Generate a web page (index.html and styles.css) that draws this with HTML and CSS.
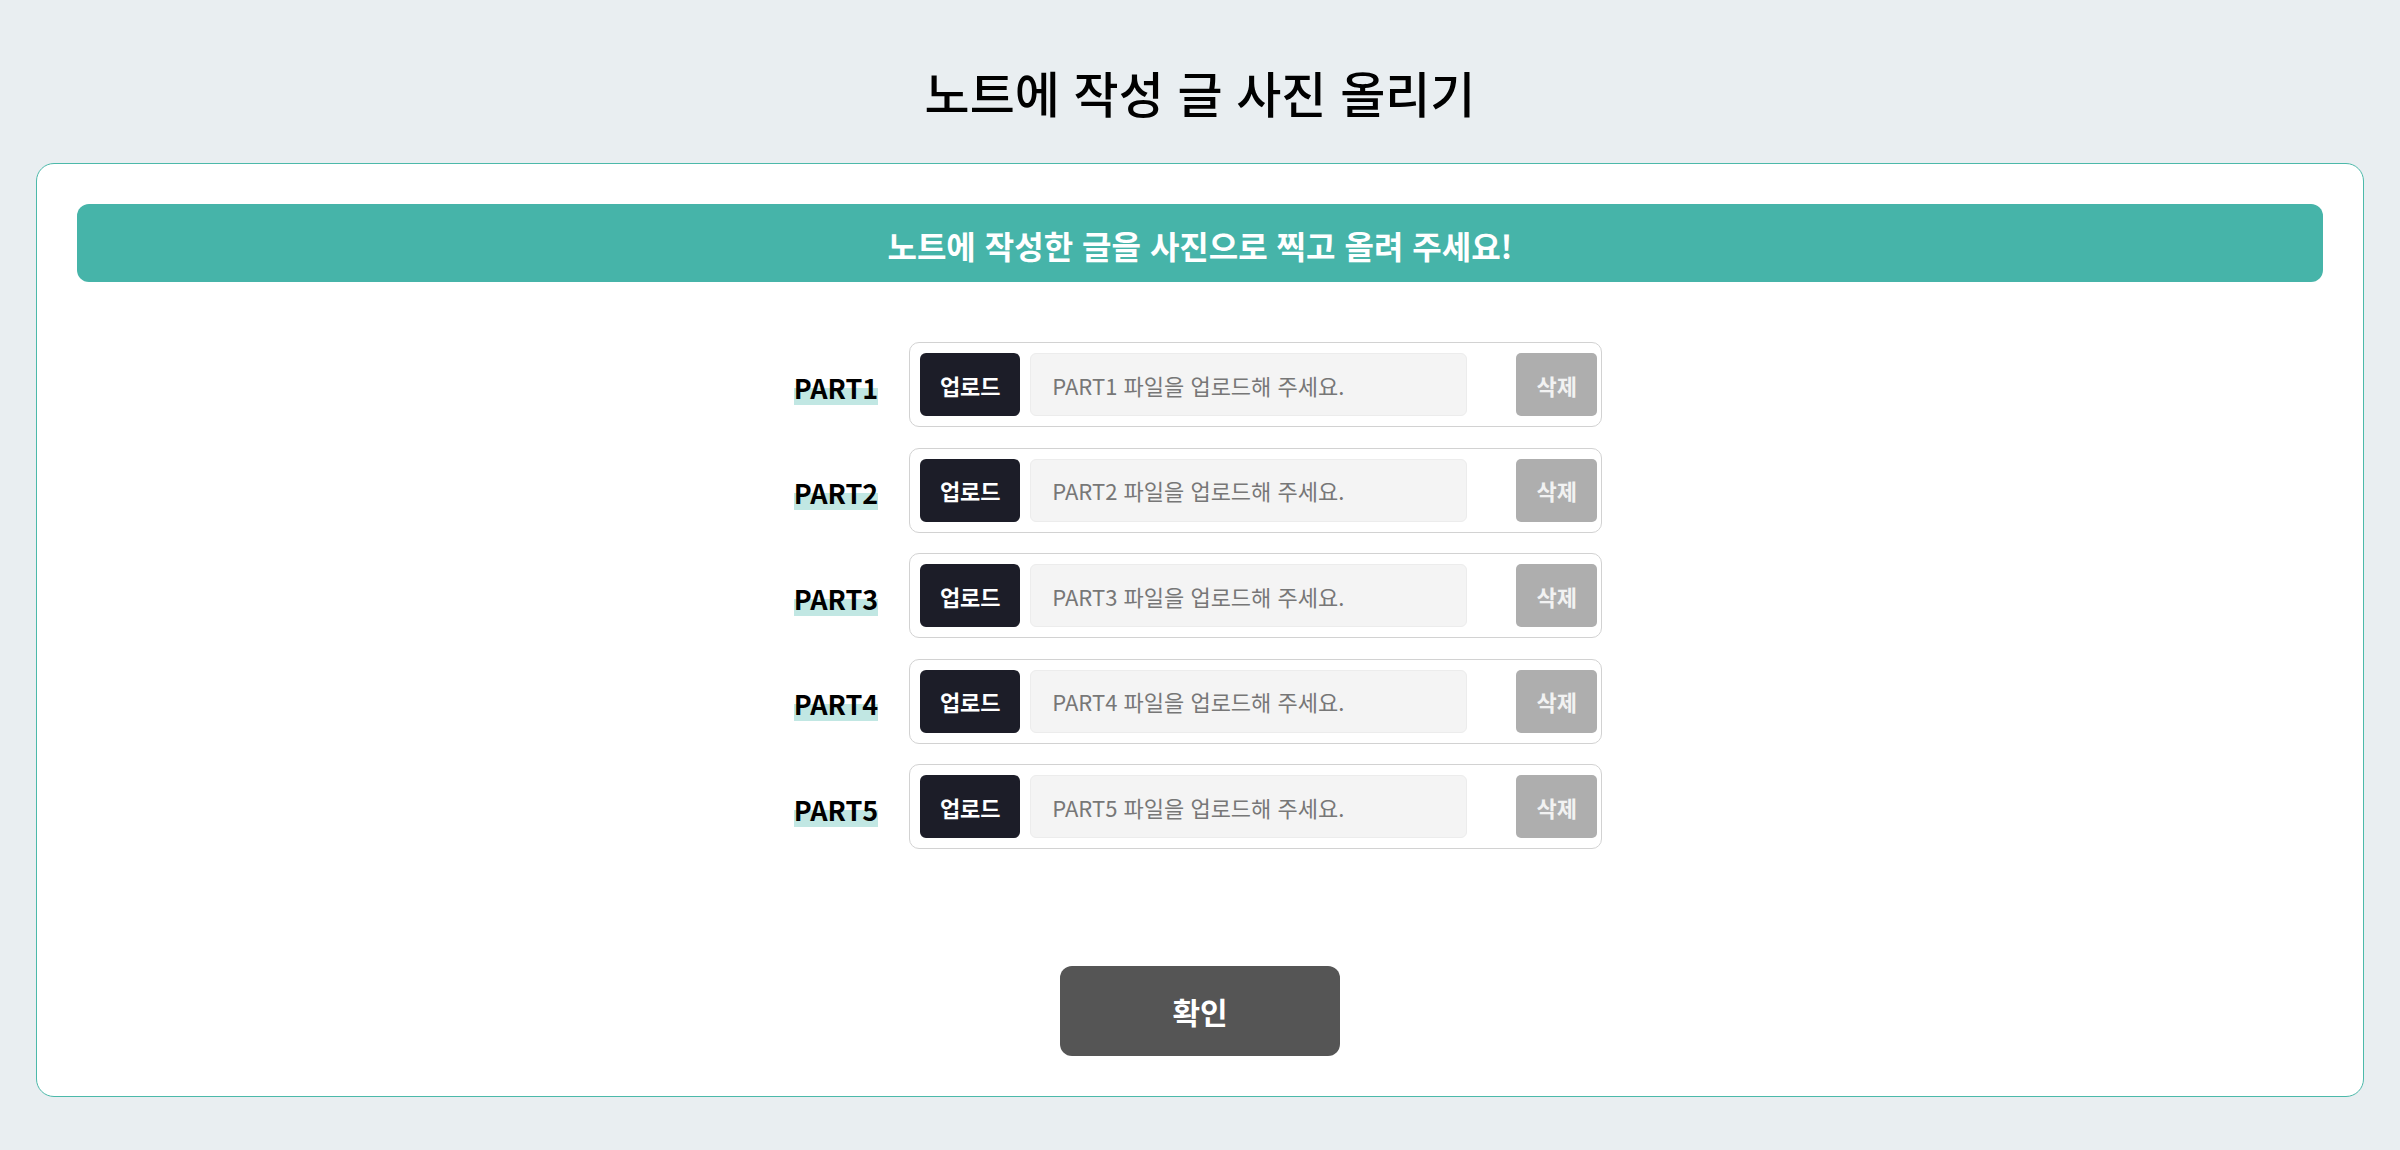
FILE: index.html
```html
<!DOCTYPE html>
<html lang="ko">
<head>
<meta charset="utf-8">
<title>노트에 작성 글 사진 올리기</title>
<link rel="stylesheet" href="styles.css">
</head>
<body>
<header class="page-header">
  <h1 class="page-title">노트에 작성 글 사진 올리기</h1>
</header>
<main class="card">
  <div class="banner">노트에 작성한 글을 사진으로 찍고 올려 주세요!</div>
  <div class="parts">
    <div class="part-row">
      <span class="part-label">PART1</span>
      <div class="upload-box">
        <button class="btn-upload" type="button">업로드</button>
        <div class="file-field">PART1 파일을 업로드해 주세요.</div>
        <button class="btn-delete" type="button">삭제</button>
      </div>
    </div>
    <div class="part-row">
      <span class="part-label">PART2</span>
      <div class="upload-box">
        <button class="btn-upload" type="button">업로드</button>
        <div class="file-field">PART2 파일을 업로드해 주세요.</div>
        <button class="btn-delete" type="button">삭제</button>
      </div>
    </div>
    <div class="part-row">
      <span class="part-label">PART3</span>
      <div class="upload-box">
        <button class="btn-upload" type="button">업로드</button>
        <div class="file-field">PART3 파일을 업로드해 주세요.</div>
        <button class="btn-delete" type="button">삭제</button>
      </div>
    </div>
    <div class="part-row">
      <span class="part-label">PART4</span>
      <div class="upload-box">
        <button class="btn-upload" type="button">업로드</button>
        <div class="file-field">PART4 파일을 업로드해 주세요.</div>
        <button class="btn-delete" type="button">삭제</button>
      </div>
    </div>
    <div class="part-row">
      <span class="part-label">PART5</span>
      <div class="upload-box">
        <button class="btn-upload" type="button">업로드</button>
        <div class="file-field">PART5 파일을 업로드해 주세요.</div>
        <button class="btn-delete" type="button">삭제</button>
      </div>
    </div>
  </div>
  <div class="actions">
    <button class="btn-confirm" type="button">확인</button>
  </div>
</main>
</body>
</html>
```
FILE: styles.css
```css
* {
  box-sizing: border-box;
}

html, body {
  margin: 0;
  padding: 0;
}

body {
  background: #e9eef1;
  font-family: "Noto Sans CJK KR", "Noto Sans", sans-serif;
  color: #000;
  padding: 0 36px 52px;
}

.page-header {
  padding-top: 57px;
  margin-bottom: 36px;
  text-align: center;
}

.page-title {
  margin: 0;
  font-size: 49px;
  line-height: 70px;
  font-weight: 500;
  color: #000;
}

.card {
  background: #fff;
  border: 1px solid #4cb9aa;
  border-radius: 18px;
  padding: 40px 40px 40px;
}

.banner {
  height: 78px;
  border-radius: 12px;
  background: #46b4a9;
  color: #fff;
  font-size: 32px;
  font-weight: 700;
  display: flex;
  align-items: center;
  justify-content: center;
  padding-top: 4px;
}

.parts {
  margin-top: 60px;
  display: flex;
  flex-direction: column;
  gap: 20.5px;
  padding-right: 4px;
}

.part-row {
  display: flex;
  align-items: center;
  justify-content: center;
  gap: 31px;
}

.part-label {
  font-size: 27px;
  font-weight: 700;
  line-height: 34px;
  color: #000;
  background: linear-gradient(to top, #c1e7e3 17px, transparent 17px);
  margin-top: 6px;
}

.upload-box {
  width: 693px;
  height: 85px;
  border: 1px solid #d2d2d2;
  border-radius: 10px;
  padding: 10px 4px 10px 10px;
  display: flex;
  align-items: stretch;
}

.btn-upload,
.btn-delete {
  border: 0;
  font-family: inherit;
  font-size: 22px;
  font-weight: 700;
  padding: 0;
  cursor: pointer;
}

.btn-upload {
  width: 100px;
  background: #1c1d28;
  color: #fff;
  border-radius: 6px;
}

.file-field {
  width: 437px;
  margin-left: 10px;
  background: #f4f4f4;
  border: 1px solid #ececec;
  border-radius: 6px;
  padding-left: 21px;
  display: flex;
  align-items: center;
  font-size: 22px;
  color: #777;
}

.btn-delete {
  width: 81px;
  margin-left: auto;
  background: #aeaeae;
  color: #f2f2f2;
  border-radius: 5px;
}

.actions {
  display: flex;
  justify-content: center;
  margin-top: 117px;
}

.btn-confirm {
  width: 280px;
  height: 90px;
  border: 0;
  border-radius: 12px;
  background: #555555;
  color: #fff;
  font-family: inherit;
  font-size: 30px;
  font-weight: 700;
  cursor: pointer;
}
```
